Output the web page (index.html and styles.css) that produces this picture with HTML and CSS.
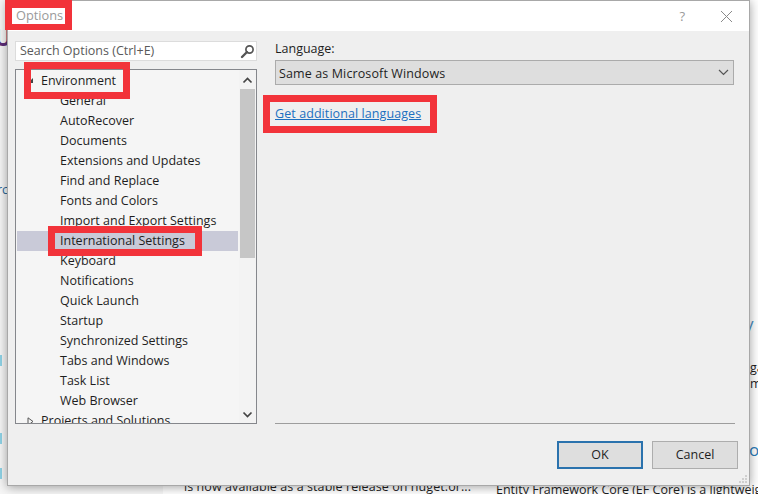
FILE: index.html
```html
<!DOCTYPE html>
<html lang="en">
<head>
<meta charset="utf-8">
<title>Options</title>
<link rel="stylesheet" href="styles.css">
</head>
<body>
<div class="backdrop">
  <div class="side"></div>
  <span class="bit bit-u">U</span>
  <span class="bit bit-rc">rc</span>
  <span class="chip chip-1"></span>
  <span class="chip chip-2"></span>
  <span class="chip chip-3"></span>
  <span class="bit bit-y">y</span>
  <span class="bit bit-ga">ga</span>
  <span class="bit bit-m">m</span>
  <span class="bit bit-or">or</span>
  <span class="bit bit-nuget">is now available as a stable release on nuget.or...</span>
  <span class="bit bit-ef">Entity Framework Core (EF Core) is a lightweight</span>
</div>

<div class="dialog">
  <header class="titlebar">
    <span class="title">Options</span>
    <span class="help">?</span>
    <svg class="close" width="13" height="13" viewBox="0 0 13 13"><path d="M1 1l11 11M12 1L1 12" stroke="#8a8a8a" stroke-width="1" fill="none"/></svg>
  </header>
  <div class="content">
    <div class="main">
      <aside class="nav">
        <div class="search">
          <span class="search-text">Search Options (Ctrl+E)</span>
          <svg width="15" height="15" viewBox="0 0 15 15"><circle cx="9.5" cy="5.5" r="3.6" fill="none" stroke="#555" stroke-width="1.7"/><path d="M7 8L2 13" stroke="#555" stroke-width="2.4" stroke-linecap="round"/></svg>
        </div>
        <div class="tree">
          <div class="rows">
            <div class="row row-top"><svg class="node" width="7" height="7" viewBox="0 0 7 7"><path d="M6 1v5H1z" fill="#444"/></svg>Environment</div>
            <div class="row row-child">General</div>
            <div class="row row-child">AutoRecover</div>
            <div class="row row-child">Documents</div>
            <div class="row row-child">Extensions and Updates</div>
            <div class="row row-child">Find and Replace</div>
            <div class="row row-child">Fonts and Colors</div>
            <div class="row row-child">Import and Export Settings</div>
            <div class="row row-child row-selected">International Settings</div>
            <div class="row row-child">Keyboard</div>
            <div class="row row-child">Notifications</div>
            <div class="row row-child">Quick Launch</div>
            <div class="row row-child">Startup</div>
            <div class="row row-child">Synchronized Settings</div>
            <div class="row row-child">Tabs and Windows</div>
            <div class="row row-child">Task List</div>
            <div class="row row-child">Web Browser</div>
            <div class="row row-top"><svg class="node" width="7" height="9" viewBox="0 0 7 9"><path d="M1 .8L6 4.5 1 8.2z" fill="none" stroke="#555"/></svg>Projects and Solutions</div>
          </div>
          <div class="scrollbar">
            <svg class="arrow" width="11" height="7" viewBox="0 0 11 7"><path d="M1.5 5.5L5.5 1.5l4 4" fill="none" stroke="#444" stroke-width="1.7"/></svg>
            <div class="thumb"></div>
            <svg class="arrow arrow-down" width="11" height="7" viewBox="0 0 11 7"><path d="M1.5 1.5L5.5 5.5l4-4" fill="none" stroke="#444" stroke-width="1.7"/></svg>
          </div>
        </div>
      </aside>
      <section class="pane">
        <div class="pane-top">
          <label class="label">Language:</label>
          <div class="select">
            <span class="select-text">Same as Microsoft Windows</span>
            <svg width="11" height="7" viewBox="0 0 11 7"><path d="M1 1l4.500 4.500L10 1" fill="none" stroke="#555" stroke-width="1.200"/></svg>
          </div>
          <a class="link" href="#">Get additional languages</a>
        </div>
        <div class="divider"></div>
      </section>
    </div>
    <footer class="actions">
      <button class="btn btn-default">OK</button>
      <button class="btn">Cancel</button>
    </footer>
    <svg class="grip" width="10" height="10" viewBox="0 0 10 10"><path d="M7 1h2v2H7zM4 4h2v2H4zM7 4h2v2H7zM1 7h2v2H1zM4 7h2v2H4zM7 7h2v2H7z" fill="#cfcfcf"/></svg>
  </div>
</div>

<div class="mark mark-options"></div>
<div class="mark mark-env"></div>
<div class="mark mark-intl"></div>
<div class="mark mark-link"></div>
</body>
</html>
```

FILE: styles.css
```css
* { box-sizing: border-box; }
html, body { margin: 0; height: 100%; overflow: hidden; background: #fff; }
body {
  position: relative;
  width: 758px;
  height: 494px;
  font-family: "Open Sans", "Noto Sans", sans-serif;
  font-size: 12.5px;
  color: #1e1e1e;
}

/* page behind the dialog */
.backdrop { position: absolute; inset: 0; overflow: hidden; }
.side { position: absolute; left: 0; top: 0; bottom: 0; width: 163px; background: #f6f6f6; }
.bit { position: absolute; white-space: nowrap; line-height: 16px; }
.bit-u { left: -6px; top: 24px; font-size: 24px; line-height: 26px; font-weight: 700; color: #5c2d78; }
.bit-rc { left: -3px; top: 182px; color: #2a6a9c; }
.chip { position: absolute; left: 0; width: 2px; background: #8fd3e6; }
.chip-1 { top: 355px; height: 11px; }
.chip-2 { top: 433px; height: 11px; }
.chip-3 { top: 468px; height: 11px; }
.bit-y { left: 745px; top: 316px; font-size: 17px; color: #4a8fc4; }
.bit-ga { left: 750px; top: 360px; }
.bit-m { left: 750px; top: 376px; }
.bit-or { left: 749px; top: 442px; font-size: 17px; color: #2a7ab8; }
.bit-nuget { left: 184px; top: 479px; letter-spacing: .08px; }
.bit-ef { left: 496px; top: 482px; }

/* dialog */
.dialog {
  position: absolute;
  left: 7px;
  top: 0;
  width: 743px;
  height: 486px;
  display: flex;
  flex-direction: column;
  background: #efefef;
  border: 1px solid #a8a8a8;
  box-shadow: 0 1px 10px rgba(0, 0, 0, .38);
}
.titlebar {
  height: 30px;
  flex: none;
  display: flex;
  align-items: center;
  padding: 0 16px 0 8px;
  background: #fff;
}
.title { flex: 1; color: #9a9a9a; font-size: 12.8px; padding-bottom: 2px; }
.help { color: #9a9a9a; font-size: 13px; margin-right: 35px; }
.close { display: block; }

.content { flex: 1; position: relative; display: flex; flex-direction: column; min-height: 0; }
.main { flex: none; display: flex; height: 393px; padding: 10px 15px 0 7px; gap: 18px; }

/* left column */
.nav { width: 242px; flex: none; display: flex; flex-direction: column; gap: 8px; }
.search {
  height: 20px;
  flex: none;
  display: flex;
  align-items: center;
  justify-content: space-between;
  padding: 0 1px 0 4px;
  background: #fff;
  border: 1px solid #dcdcdc;
}
.search-text { color: #5a5a5a; padding-bottom: 2px; }
.search svg { display: block; }
.tree {
  flex: 1;
  height: 355px;
  min-height: 0;
  display: flex;
  background: #f5f5f5;
  border: 1px solid #85878c;
  overflow: hidden;
}
.rows { flex: 1; min-width: 0; padding: 1px 1px 0 1px; overflow: hidden; }
.row {
  height: 20px;
  display: flex;
  align-items: center;
  padding-bottom: 2px;
  white-space: nowrap;
  position: relative;
}
.row-top { padding-left: 24px; }
.row-child { padding-left: 43px; }
.row-selected { background: #c9cad8; }
.node { position: absolute; left: 10px; top: 6px; }
.scrollbar {
  width: 17px;
  flex: none;
  display: flex;
  flex-direction: column;
  align-items: center;
  background: #f3f3f3;
}
.arrow { flex: none; margin-top: 7px; display: block; }
.thumb { flex: none; width: 15px; height: 169px; margin-top: 5px; background: #c6c6c6; }
.arrow-down { margin-top: auto; margin-bottom: 5px; }

/* right column */
.pane { flex: 1; min-width: 0; display: flex; flex-direction: column; justify-content: space-between; }
.pane-top { display: flex; flex-direction: column; align-items: flex-start; }
.label { line-height: 17px; margin-top: -1px; margin-bottom: 3px; }
.select {
  width: 459px;
  height: 25px;
  display: flex;
  align-items: center;
  justify-content: space-between;
  padding: 0 4px 0 3px;
  background: #dedede;
  border: 1px solid #ababab;
}
.select-text { padding-top: 2px; letter-spacing: .12px; }
.select svg { display: block; }
.link { margin-top: 20px; line-height: 17px; color: #1c6fc0; text-decoration: underline; letter-spacing: .08px; }
.divider { height: 1px; width: 460px; background: #9d9d9d; }

.actions { display: flex; justify-content: flex-end; gap: 9px; padding: 17px 11px 0 0; }
.btn {
  width: 86px;
  height: 28px;
  padding: 0 0 2px;
  font: inherit;
  color: #1e1e1e;
  background: #dedede;
  border: 1px solid #adadad;
}
.btn-default { border: 2px solid #2a72ad; }
.grip { position: absolute; right: 1px; bottom: 1px; }

/* red annotation boxes over the screenshot */
.mark { position: absolute; border: 7px solid #f2333a; }
.mark-options { left: 5px; top: 0; width: 67px; height: 30px; border-width: 8px 7px 6px; }
.mark-env { left: 24px; top: 62px; width: 106px; height: 37px; }
.mark-intl { left: 48px; top: 226px; width: 154px; height: 30px; }
.mark-link { left: 263px; top: 95px; width: 174px; height: 38px; }
```
